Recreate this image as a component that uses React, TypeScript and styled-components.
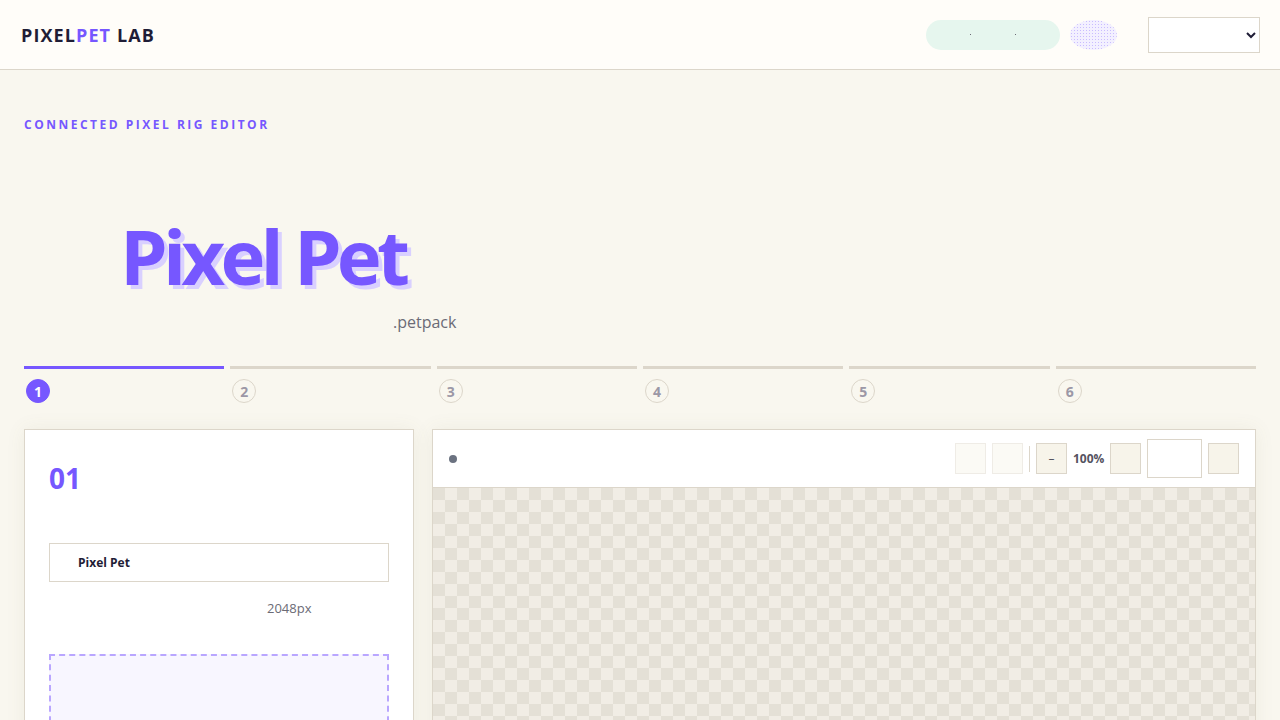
import React from 'react';
import styled, { createGlobalStyle } from 'styled-components';

const GlobalStyle = createGlobalStyle`
  html, body {
    margin: 0;
    padding: 0;
    background: #f9f7ef;
    font-family: "Open Sans", "Liberation Sans", sans-serif;
    color: #1f1d36;
    overflow: hidden;
  }
  * {
    box-sizing: border-box;
  }
`;

const Header = styled.header`
  height: 70px;
  padding: 0 20px 0 21px;
  display: flex;
  align-items: center;
  justify-content: space-between;
  background: #fffdf9;
  border-bottom: 1px solid #dcd6ca;
`;

const Logo = styled.div`
  font-size: 18px;
  font-weight: 700;
  letter-spacing: 1.1px;
  color: #1f1d36;
  span {
    color: #7657ff;
  }
`;

const HeaderTools = styled.div`
  display: flex;
  align-items: center;
`;

const StatusPill = styled.div`
  width: 134px;
  height: 30px;
  border-radius: 15px;
  background: #e6f6ee;
  display: flex;
  align-items: center;
  justify-content: center;
  gap: 44px;
  i {
    width: 1px;
    height: 1px;
    background: #6b6b76;
  }
`;

const Avatar = styled.div`
  width: 47px;
  height: 30px;
  margin-left: 10px;
  border-radius: 50%;
  background-color: #f3f0ff;
  background-image: radial-gradient(#c9bcff 0.6px, transparent 0.7px);
  background-size: 3px 3px;
`;

const LangSelect = styled.select`
  width: 112px;
  height: 36px;
  margin-left: 31px;
  border: 1px solid #dcd6ca;
  background: #fff;
  border-radius: 0;
  color: #1f1d36;
`;

const Main = styled.main`
  padding: 46px 24px 0;
`;

const Eyebrow = styled.div`
  font-size: 12px;
  font-weight: 700;
  letter-spacing: 2.5px;
  color: #7657ff;
  line-height: 18px;
`;

const Hero = styled.div`
  display: flex;
  flex-direction: column;
  align-items: flex-start;
  padding: 80px 0 0 96px;
  height: 223px;
`;

const Title = styled.h1`
  margin: 0;
  font-size: 76px;
  font-weight: 700;
  letter-spacing: -4.8px;
  line-height: 84px;
  color: #7657ff;
  text-shadow: 4px 4px 0 #d9d0ff;
`;

const Extension = styled.div`
  margin: 13px 0 0 273px;
  font-size: 16px;
  color: #6b6b76;
`;

const Steps = styled.div`
  display: grid;
  grid-template-columns: repeat(6, 1fr);
  gap: 6px;
  margin-top: 9px;
`;

const Step = styled.div<{ $active?: boolean }>`
  border-top: 3px solid ${(p) => (p.$active ? '#7657ff' : '#dcd6ca')};
  padding: 10px 0 0 2px;
  height: 63px;
`;

const StepDot = styled.div<{ $active?: boolean }>`
  width: 24px;
  height: 24px;
  border-radius: 50%;
  display: flex;
  align-items: center;
  justify-content: center;
  font-size: 14px;
  font-weight: 700;
  background: ${(p) => (p.$active ? '#7657ff' : 'transparent')};
  color: ${(p) => (p.$active ? '#fff' : '#9c98a6')};
  border: 1px solid ${(p) => (p.$active ? '#7657ff' : '#dcd6ca')};
`;

const Workspace = styled.div`
  display: grid;
  grid-template-columns: 390px 1fr;
  gap: 18px;
  align-items: start;
`;

const Card = styled.section`
  background: #fff;
  border: 1px solid #dcd6ca;
  box-shadow: 0 0 18px rgba(120, 110, 80, 0.08);
  height: 320px;
`;

const SetupCard = styled(Card)`
  padding: 29px 24px 0;
`;

const StepNumber = styled.div`
  font-size: 28px;
  font-weight: 700;
  color: #7657ff;
  line-height: 38px;
`;

const NameInput = styled.div`
  margin-top: 46px;
  height: 39px;
  border: 1px solid #dcd6ca;
  padding: 0 28px;
  display: flex;
  align-items: center;
  font-size: 12px;
  font-weight: 700;
  color: #1f1d36;
`;

const SizeLabel = styled.div`
  margin-top: 16px;
  padding-left: 218px;
  font-size: 13px;
  color: #6b6b76;
  line-height: 20px;
`;

const DropZone = styled.div`
  margin-top: 36px;
  height: 120px;
  border: 2px dashed #b9a6ff;
  background: #f8f6ff;
`;

const CanvasCard = styled(Card)`
  display: flex;
  flex-direction: column;
`;

const Toolbar = styled.div`
  height: 58px;
  flex-shrink: 0;
  border-bottom: 1px solid #dcd6ca;
  display: flex;
  align-items: center;
  padding: 0 16px 0 16px;
`;

const StatusDot = styled.div`
  width: 8px;
  height: 8px;
  border-radius: 50%;
  background: #6b7280;
`;

const ToolGroup = styled.div`
  margin-left: auto;
  display: flex;
  align-items: center;
  gap: 6px;
`;

const ToolButton = styled.button<{ $faded?: boolean }>`
  width: 31px;
  height: 31px;
  padding: 0;
  border: 1px solid #dcd6ca;
  background: #f7f4ea;
  color: #55535f;
  font-family: inherit;
  font-size: 12px;
  opacity: ${(p) => (p.$faded ? 0.45 : 1)};
`;

const Divider = styled.div`
  width: 1px;
  height: 26px;
  background: #dcd6ca;
`;

const Zoom = styled.span`
  font-size: 12px;
  font-weight: 700;
  color: #55535f;
  width: 31px;
  text-align: center;
`;

const ZoomInput = styled.div`
  width: 55px;
  height: 39px;
  border: 1px solid #dcd6ca;
  background: #fff;
`;

const Checker = styled.div`
  flex: 1;
  background-color: #f1ede5;
  background-image: linear-gradient(45deg, #e4e0d6 25%, transparent 25%, transparent 75%, #e4e0d6 75%),
    linear-gradient(45deg, #e4e0d6 25%, transparent 25%, transparent 75%, #e4e0d6 75%);
  background-size: 24px 24px;
  background-position: 12px 0, 0 12px;
`;

const steps = [1, 2, 3, 4, 5, 6];

const App: React.FC = () => {
  return (
    <>
      <GlobalStyle />
      <Header>
        <Logo>
          PIXEL<span>PET</span> LAB
        </Logo>
        <HeaderTools>
          <StatusPill>
            <i />
            <i />
          </StatusPill>
          <Avatar />
          <LangSelect>
            <option value=""></option>
          </LangSelect>
        </HeaderTools>
      </Header>
      <Main>
        <Eyebrow>CONNECTED PIXEL RIG EDITOR</Eyebrow>
        <Hero>
          <Title>Pixel Pet</Title>
          <Extension>.petpack</Extension>
        </Hero>
        <Steps>
          {steps.map((n) => (
            <Step key={n} $active={n === 1}>
              <StepDot $active={n === 1}>{n}</StepDot>
            </Step>
          ))}
        </Steps>
        <Workspace>
          <SetupCard>
            <StepNumber>01</StepNumber>
            <NameInput>Pixel Pet</NameInput>
            <SizeLabel>2048px</SizeLabel>
            <DropZone />
          </SetupCard>
          <CanvasCard>
            <Toolbar>
              <StatusDot />
              <ToolGroup>
                <ToolButton $faded />
                <ToolButton $faded />
                <Divider />
                <ToolButton>–</ToolButton>
                <Zoom>100%</Zoom>
                <ToolButton />
                <ZoomInput />
                <ToolButton />
              </ToolGroup>
            </Toolbar>
            <Checker />
          </CanvasCard>
        </Workspace>
      </Main>
    </>
  );
};

export default App;
